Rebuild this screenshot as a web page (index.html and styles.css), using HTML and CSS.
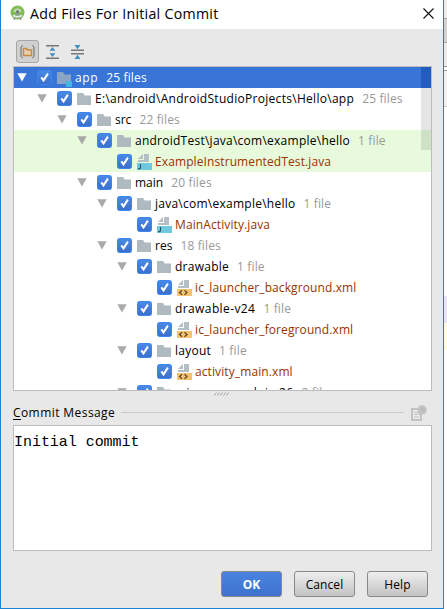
FILE: index.html
```
<!DOCTYPE html>
<html lang="en">
<head>
<meta charset="utf-8">
<title>Add Files For Initial Commit</title>
<link rel="stylesheet" href="styles.css">
</head>
<body>
<svg class="defs" aria-hidden="true">
  <defs>
    <linearGradient id="blue" x1="0" y1="0" x2="0" y2="1"><stop offset="0" stop-color="#4a8ae6"/><stop offset="1" stop-color="#3a6fcb"/></linearGradient>
    <symbol id="arrow" viewBox="0 0 10 9"><path d="M.3.3h9.4L5 8.6z" fill="currentColor"/></symbol>
    <symbol id="check" viewBox="0 0 15 15"><rect x=".5" y=".5" width="14" height="14" rx="2" fill="url(#blue)" stroke="#3b86ea"/><path d="M4.3 7.4l2.2 3 4.4-6.8" fill="none" stroke="#fff" stroke-width="2"/></symbol>
    <symbol id="folder" viewBox="0 0 15 12"><path d="M0 0h6l1.6 2.5H14V12H0z" fill="#aeb9c0"/></symbol>
    <symbol id="java" viewBox="0 0 15 16"><path d="M7 0h5v8H1V6h6z" fill="#b3bec5"/><path d="M1 5l5-5v5z" fill="#b3bec5"/><path d="M0 9h15v7H0z" fill="#70c8de"/><path d="M3.5 10v3.6q0 1-1.1 1H1.2" fill="none" stroke="#28505c" stroke-width="1.1"/></symbol>
    <symbol id="xml" viewBox="0 0 15 16"><path d="M7 0h5v8H1V6h6z" fill="#b3bec5"/><path d="M1 5l5-5v5z" fill="#b3bec5"/><path d="M0 9h15v7H0z" fill="#f4c271"/><path d="M5 10.3L2.500 12.500l2.500 2.200M7.500 10.300l2.500 2.200-2.500 2.200" fill="none" stroke="#5d4420" stroke-width="1.200"/></symbol>
  </defs>
</svg>
<div class="screen">
<main class="dialog">
  <header class="titlebar">
    <svg class="logo" viewBox="0 0 15 16"><circle cx="7.5" cy="7.5" r="7" fill="#83bd58"/><path d="M4 7a3.500 3.500 0 0 1 7 0z" fill="#c9dfb9"/><path d="M7.500 7L4 15M7.500 7l3.500 8" stroke="#8d969c" stroke-width="1.500" fill="none"/><path d="M3 10.500q4.500 2.500 9 0" stroke="#e7ecee" stroke-width="1.700" fill="none"/><circle cx="7.500" cy="6.500" r="1.300" fill="#59626a"/></svg>
    <h1>Add Files For Initial Commit</h1>
    <svg class="close" viewBox="0 0 11 11"><path d="M.5.5l10 10M10.5.5l-10 10" stroke="#111" stroke-width="1.1"/></svg>
  </header>
  <div class="toolbar">
    <button class="tool on"><svg width="15" height="14" viewBox="0 0 15 14"><path d="M3 .5H2.500L1 2v9.500L2.500 13H3M12 .5h.5L14 2v9.500L12.500 13H12" fill="none" stroke="#666"/><path d="M3.500 10.500v-7h3l1 1.500h4v5.500z" fill="#e6cfae" stroke="#c68a3c" stroke-width="1.400"/></svg></button>
    <button class="tool"><svg width="13" height="14" viewBox="0 0 13 14"><path d="M0 .7h13M0 13.300h13" stroke="#777" stroke-width="1.500"/><path d="M6.500 2l3 3.800h-6zM6.500 12l3-3.800h-6z" fill="#468fc1"/></svg></button>
    <button class="tool"><svg width="13" height="14" viewBox="0 0 13 14"><path d="M0 5.300h13M0 8.700h13" stroke="#777" stroke-width="1.500"/><path d="M6.500 4.200L9.500 0h-6zM6.500 9.800l3 4.200h-6z" fill="#468fc1"/></svg></button>
  </div>
  <section class="tree">
    <div class="row d0 selected"><svg class="arrow"><use href="#arrow"/></svg><svg class="check"><use href="#check"/></svg><span class="module"><svg class="folder"><use href="#folder"/></svg></span><span class="name">app</span><span class="count">25 files</span></div>
    <div class="row d1"><svg class="arrow"><use href="#arrow"/></svg><svg class="check"><use href="#check"/></svg><svg class="folder"><use href="#folder"/></svg><span class="name root">E:\android\AndroidStudioProjects\Hello\app</span><span class="count">25 files</span></div>
    <div class="row d2"><svg class="arrow"><use href="#arrow"/></svg><svg class="check"><use href="#check"/></svg><svg class="folder"><use href="#folder"/></svg><span class="name">src</span><span class="count">22 files</span></div>
    <div class="row d3 test"><svg class="arrow"><use href="#arrow"/></svg><svg class="check"><use href="#check"/></svg><svg class="folder"><use href="#folder"/></svg><span class="name package">androidTest\java\com\example\hello</span><span class="count">1 file</span></div>
    <div class="row d4 test"><i class="arrow"></i><svg class="check"><use href="#check"/></svg><svg class="file"><use href="#java"/></svg><span class="name leaf">ExampleInstrumentedTest.java</span></div>
    <div class="row d3"><svg class="arrow"><use href="#arrow"/></svg><svg class="check"><use href="#check"/></svg><svg class="folder"><use href="#folder"/></svg><span class="name">main</span><span class="count">20 files</span></div>
    <div class="row d4"><svg class="arrow"><use href="#arrow"/></svg><svg class="check"><use href="#check"/></svg><svg class="folder"><use href="#folder"/></svg><span class="name package">java\com\example\hello</span><span class="count">1 file</span></div>
    <div class="row d5"><i class="arrow"></i><svg class="check"><use href="#check"/></svg><svg class="file"><use href="#java"/></svg><span class="name leaf">MainActivity.java</span></div>
    <div class="row d4"><svg class="arrow"><use href="#arrow"/></svg><svg class="check"><use href="#check"/></svg><svg class="folder"><use href="#folder"/></svg><span class="name">res</span><span class="count">18 files</span></div>
    <div class="row d5"><svg class="arrow"><use href="#arrow"/></svg><svg class="check"><use href="#check"/></svg><svg class="folder"><use href="#folder"/></svg><span class="name wide">drawable</span><span class="count">1 file</span></div>
    <div class="row d6"><i class="arrow"></i><svg class="check"><use href="#check"/></svg><svg class="file"><use href="#xml"/></svg><span class="name leaf">ic_launcher_background.xml</span></div>
    <div class="row d5"><svg class="arrow"><use href="#arrow"/></svg><svg class="check"><use href="#check"/></svg><svg class="folder"><use href="#folder"/></svg><span class="name wider">drawable-v24</span><span class="count">1 file</span></div>
    <div class="row d6"><i class="arrow"></i><svg class="check"><use href="#check"/></svg><svg class="file"><use href="#xml"/></svg><span class="name leaf">ic_launcher_foreground.xml</span></div>
    <div class="row d5"><svg class="arrow"><use href="#arrow"/></svg><svg class="check"><use href="#check"/></svg><svg class="folder"><use href="#folder"/></svg><span class="name wide">layout</span><span class="count">1 file</span></div>
    <div class="row d6"><i class="arrow"></i><svg class="check"><use href="#check"/></svg><svg class="file"><use href="#xml"/></svg><span class="name leaf">activity_main.xml</span></div>
    <div class="row d5"><svg class="arrow"><use href="#arrow"/></svg><svg class="check"><use href="#check"/></svg><svg class="folder"><use href="#folder"/></svg><span class="name wider">mipmap-anydpi-v26</span><span class="count">2 files</span></div>
    <div class="thumb"></div>
  </section>
  <div class="grip"><svg width="16" height="4" viewBox="0 0 16 4"><path d="M.5 3.500l2-3M3.500 3.500l2-3M6.500 3.500l2-3M9.500 3.500l2-3M12.500 3.500l2-3" stroke="#999" stroke-width=".9"/></svg></div>
  <div class="caption"><label><u>C</u>ommit Message</label><span class="rule"></span><svg width="16" height="16" viewBox="0 0 16 16"><path d="M1 4h9v11H1z" fill="#ebebeb" stroke="#c2c2c2" stroke-width="2"/><path d="M3 7.500h6M3 9.500h6M3 12h5" stroke="#c2c2c2"/><circle cx="11" cy="5" r="4.700" fill="#c2c2c2"/><path d="M11 2.500V5h3" fill="none" stroke="#b0b0b0"/></svg></div>
  <div class="message">Initial commit</div>
  <footer><button class="btn ok">OK</button><button class="btn">Cancel</button><button class="btn">Help</button></footer>
</main>
<aside class="behind"><div class="b1"></div><div class="b2"></div><div class="b3"></div><div class="b4"></div><div class="b5"></div><div class="b6"></div><div class="b7"></div><div class="b8"></div></aside>
</div>
</body>
</html>
```
FILE: styles.css
```
* { box-sizing: border-box; }
body { margin: 0; font: 12px/21px "Open Sans", "Noto Sans", sans-serif; color: #000; }
button { font: inherit; padding: 0; }
svg { display: block; flex: none; }
.defs { position: absolute; width: 0; height: 0; }
.screen { display: flex; width: 447px; height: 609px; overflow: hidden; }
.dialog { width: 444px; height: 609px; background: #e8e8e8; border: solid #1883d7; border-width: 0 1px 1px; display: flex; flex-direction: column; }
.titlebar { height: 29px; background: #fff; display: flex; align-items: center; padding: 0 9px 3px 9px; flex: none; }
.logo { width: 15px; height: 16px; }
h1 { margin: 0 auto 0 5px; font-size: 14.2px; font-weight: 400; letter-spacing: .28px; white-space: nowrap; }
.close { width: 11px; height: 11px; }
.toolbar { display: flex; gap: 2px; height: 37px; padding: 11px 0 0 15px; flex: none; }
.tool { width: 23px; height: 23px; border: 1px solid transparent; border-radius: 3px; background: none; display: flex; align-items: center; justify-content: center; }
.tool.on { background: #d0d0d0; border-color: #a6a6a6; }
.tree { position: relative; width: 419px; height: 325px; margin-left: 12px; border: 1px solid #bcbcbc; background: #fff; overflow: hidden; flex: none; }
.row { display: flex; align-items: center; height: 21px; white-space: nowrap; padding-left: 3px; }
.d1 { padding-left: 23px; }
.d2 { padding-left: 43px; }
.d3 { padding-left: 63px; }
.d4 { padding-left: 83px; }
.d5 { padding-left: 103px; }
.d6 { padding-left: 123px; }
.arrow { width: 10px; height: 9px; color: #aaa; margin-right: 10px; flex: none; }
.check { width: 15px; height: 15px; margin-right: 5px; }
.folder { width: 15px; height: 12px; margin-right: 3px; }
.file { width: 15px; height: 16px; margin-right: 3px; }
.count { color: #999; margin-left: 8px; letter-spacing: .15px; }
.root { letter-spacing: .29px; }
.package { letter-spacing: .25px; }
.wide { letter-spacing: .25px; }
.wider { letter-spacing: .4px; }
.leaf { color: #993300; letter-spacing: .1px; }
.selected { background: #3875d7; color: #fff; }
.selected .arrow, .selected .count { color: #fff; }
.selected .name { letter-spacing: .6px; }
.selected .folder { opacity: .7; }
.module { position: relative; }
.module::after { content: ""; position: absolute; z-index: 1; right: 3px; bottom: -3px; width: 6px; height: 6px; background: #40b6e0; }
.test { background: #e7fadb; }
.thumb { position: absolute; right: 0; top: 0; width: 10px; height: 83px; background: linear-gradient(#205dbe 21px, rgba(0, 0, 0, .1) 21px); }
.grip { height: 12px; padding: 1px 0 0 213px; flex: none; }
.caption { display: flex; align-items: center; height: 22px; padding: 0 16px 3px 12px; letter-spacing: .42px; flex: none; }
.caption u { text-underline-offset: 2px; }
.rule { flex: 1; height: 1px; background: #c9c9c9; margin: 0 7px 0 6px; }
.message { width: 419px; height: 126px; margin-left: 12px; border: 1px solid #bcbcbc; background: #fff; font: 15px/18px "Liberation Mono", monospace; letter-spacing: -.04px; padding: 8px 0 0 0; flex: none; }
footer { display: flex; justify-content: flex-end; gap: 12px; padding: 20px 15px 0 0; }
.btn { width: 61px; height: 26px; border: 1px solid #888; border-radius: 3px; background: linear-gradient(#eee, #c3c3c3); letter-spacing: .1px; }
.ok { color: #fff; font-weight: 700; background: linear-gradient(#4a84e0, #3d72cc); }
.behind { width: 3px; background: #fff; display: flex; flex-direction: column; }
.b1 { height: 19px; background: #ececec; border-bottom: 1px solid #aaa; }
.b2 { height: 24px; background: #d2d2d2; border-bottom: 1px solid #aaa; }
.b3 { height: 24px; background: #ececec; border-bottom: 1px solid #999; }
.b4 { height: 4px; background: #fff; border-bottom: 1px solid #999; }
.b5 { height: 36px; background: #f2f2f2; border-bottom: 1px solid #ccc; }
.b6 { height: 189px; }
.b7 { height: 27px; background: #e4e4ff; }
.b8 { height: 27px; background: #fffae3; }
```
